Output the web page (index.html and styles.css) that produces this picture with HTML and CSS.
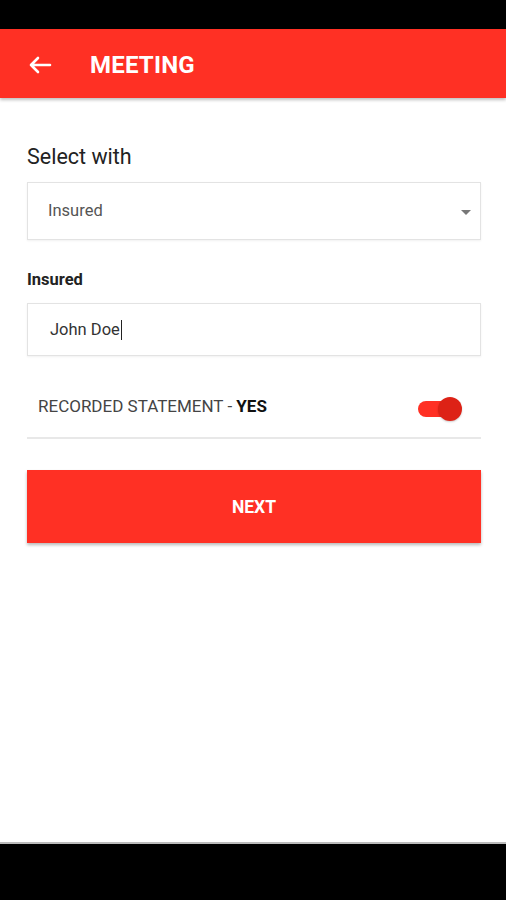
FILE: index.html
```html
<!DOCTYPE html>
<html lang="en">
  <head>
    <meta charset="UTF-8" />
    <meta name="viewport" content="width=device-width, initial-scale=1.0" />
    <title>Meeting</title>
    <link rel="stylesheet" href="styles.css">
  </head>
  <body>
    <div class="status-bar"></div>
    <header class="toolbar">
      <svg class="back" width="24" height="18" viewBox="0 0 24 18">
        <path d="M3 9H22M10 2L3 9L10 16" fill="none" stroke="#fff" stroke-width="2.6" stroke-linecap="round" stroke-linejoin="round" />
      </svg>
      <h1>MEETING</h1>
    </header>

    <main class="content">
      <h2 class="section-title">Select with</h2>
      <div class="select-box">
        <span>Insured</span>
        <span class="caret"></span>
      </div>

      <label class="field-label">Insured</label>
      <div class="input-box">John Doe<span class="cursor"></span></div>

      <div class="statement-row">
        <span class="statement">RECORDED STATEMENT - <b>YES</b></span>
        <span class="switch"><span class="thumb"></span></span>
      </div>

      <button class="next-btn">NEXT</button>
    </main>

    <div class="nav-bar"></div>
  </body>
</html>
```

FILE: styles.css
```css
:root {
  --red: #ff3024;
  --red-dark: #dd2216;
  --border: #e3e3e3;
  --text: #333;
}

* {
  box-sizing: border-box;
  margin: 0;
  padding: 0;
  font-family: Roboto, "Liberation Sans", Arial, sans-serif;
}

body {
  display: flex;
  flex-direction: column;
  height: 900px;
  width: 506px;
  background: #fff;
  overflow: hidden;
}

.status-bar {
  height: 29px;
  background: #000;
  flex-shrink: 0;
}

.toolbar {
  height: 69px;
  flex-shrink: 0;
  display: flex;
  align-items: center;
  padding-top: 3px;
  background: var(--red);
  box-shadow: 0 2px 3px rgba(0, 0, 0, 0.25);
  position: relative;
  z-index: 1;
}

.back {
  margin-left: 28px;
}

.toolbar h1 {
  margin-left: 38px;
  color: #fff;
  font-size: 24px;
  font-weight: 700;
  letter-spacing: 0.2px;
}

.content {
  display: flex;
  flex-direction: column;
  padding: 0 25px 0 27px;
}

.section-title {
  margin-top: 46px;
  font-size: 21.5px;
  line-height: 26px;
  font-weight: 400;
  color: #222;
}

.select-box {
  margin-top: 12px;
  height: 58px;
  display: flex;
  align-items: center;
  justify-content: space-between;
  padding: 0 9px 2px 20px;
  border: 1px solid var(--border);
  box-shadow: 0 1px 2px rgba(0, 0, 0, 0.06);
  font-size: 16.5px;
  color: #555;
}

.caret {
  width: 0;
  height: 0;
  margin-top: 5px;
  border-left: 5px solid transparent;
  border-right: 5px solid transparent;
  border-top: 5px solid #777;
}

.field-label {
  margin-top: 30px;
  font-size: 16.5px;
  line-height: 20px;
  font-weight: 700;
  color: #222;
}

.input-box {
  margin-top: 13px;
  height: 53px;
  display: flex;
  align-items: center;
  padding-left: 22px;
  border: 1px solid var(--border);
  box-shadow: 0 1px 2px rgba(0, 0, 0, 0.06);
  font-size: 16.5px;
  color: var(--text);
}

.cursor {
  display: inline-block;
  width: 1px;
  height: 20px;
  background: #222;
  margin-left: 1px;
}

.statement-row {
  margin-top: 22px;
  height: 61px;
  display: flex;
  align-items: center;
  justify-content: space-between;
  padding: 0 30px 4px 11px;
  border-bottom: 2px solid #e8e8e8;
}

.statement {
  font-size: 17px;
  color: #444;
}

.statement b {
  color: #111;
}

.switch {
  position: relative;
  width: 33px;
  height: 16px;
  margin-top: 6px;
  border-radius: 8px;
  background: var(--red);
}

.thumb {
  position: absolute;
  right: -11px;
  top: -4px;
  width: 24px;
  height: 24px;
  border-radius: 50%;
  background: var(--red-dark);
  box-shadow: 0 1px 2px rgba(0, 0, 0, 0.2);
}

.next-btn {
  margin-top: 31px;
  height: 73px;
  border: none;
  background: var(--red);
  color: #fff;
  font-size: 17.5px;
  font-weight: 700;
  box-shadow: 0 2px 3px rgba(0, 0, 0, 0.28);
}

.nav-bar {
  margin-top: auto;
  height: 58px;
  flex-shrink: 0;
  background: #000;
  border-top: 2px solid #bbb;
}
```
